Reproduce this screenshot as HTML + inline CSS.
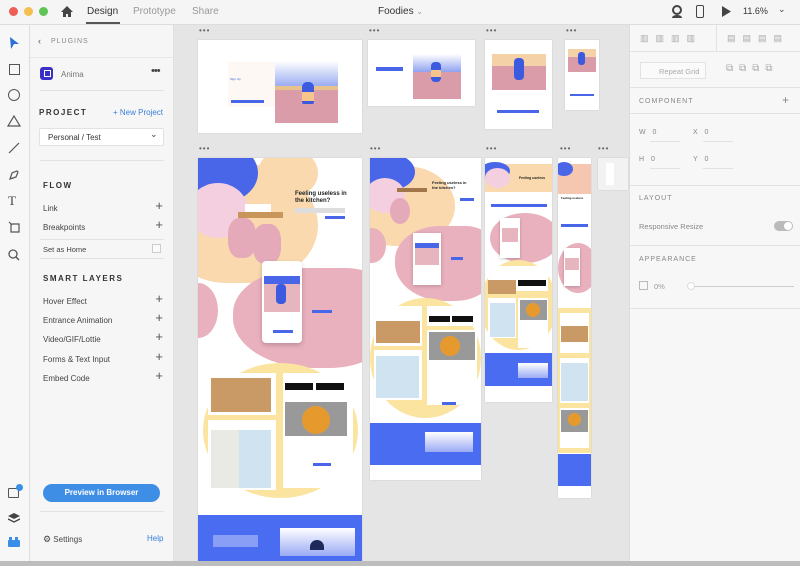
<!DOCTYPE html>
<html><head><meta charset="utf-8"><style>
*{margin:0;padding:0;box-sizing:border-box}
body{width:800px;height:566px;overflow:hidden;font-family:"Liberation Sans",sans-serif;background:#e5e5e5;position:relative;color:#444}
.a{position:absolute}
.top{left:0;top:0;width:800px;height:25px;background:#f5f5f5;border-bottom:1px solid #ddd}
.dot{width:9px;height:9px;border-radius:50%;top:7px}
.tb{left:0;top:25px;width:30px;height:536px;background:#f7f7f7;border-right:1px solid #ddd}
.pn{left:30px;top:25px;width:144px;height:536px;background:#f6f6f6;border-right:1px solid #e0e0e0}
.rp{left:629px;top:25px;width:171px;height:536px;background:#f7f7f7;border-left:1px solid #ddd}
.hd{font-size:8px;font-weight:bold;letter-spacing:1.5px;color:#333}
.it{font-size:8px;color:#444}
.pl{font-size:13px;color:#555;right:10px}
.hr{height:1px;background:#e2e2e2}
.ab{background:#fff;overflow:hidden;box-shadow:0 0 1px #bbb}
.dd{font-size:8px;color:#666;letter-spacing:1px}
.bl{border-radius:50%}
.rt{font-size:7px;color:#888;letter-spacing:1px}
</style></head><body>
<div class="a top">
<div class="a dot" style="left:9px;background:#ed5f57"></div>
<div class="a dot" style="left:24px;background:#f5be4f"></div>
<div class="a dot" style="left:39px;background:#5ec454"></div>
<svg class="a" style="left:60px;top:5px" width="14" height="13" viewBox="0 0 14 13"><path d="M7 1L1 7h2v5h3V9h2v3h3V7h2z" fill="#444"/></svg>
<div class="a" style="left:87px;top:6px;font-size:10px;color:#333">Design</div>
<div class="a" style="left:86px;top:22px;width:34px;height:2px;background:#555"></div>
<div class="a" style="left:133px;top:6px;font-size:10px;color:#999">Prototype</div>
<div class="a" style="left:192px;top:6px;font-size:10px;color:#999">Share</div>
<div class="a" style="left:378px;top:6px;font-size:10px;color:#333">Foodies <span style="color:#999;font-size:8px">⌄</span></div>
<svg class="a" style="left:671px;top:5px" width="12" height="13"><circle cx="6" cy="5" r="4" fill="none" stroke="#444" stroke-width="2"/><path d="M1 13c0-4 10-4 10 0" fill="#444"/></svg>
<div class="a" style="left:696px;top:5px;width:8px;height:13px;border:1.5px solid #444;border-radius:2px"></div>
<svg class="a" style="left:722px;top:6px" width="9" height="11"><path d="M0 0L9 5.5L0 11z" fill="#444"/></svg>
<div class="a" style="left:743px;top:6px;font-size:9px;color:#333">11.6%</div>
<div class="a" style="left:778px;top:4px;font-size:9px;color:#444">⌄</div>
</div>

<div class="a tb">
<svg class="a" style="left:9px;top:12px" width="10" height="12"><path d="M1 0L10 7H5L2 12z" fill="#2b6fd8"/></svg>
<div class="a" style="left:9px;top:39px;width:11px;height:11px;border:1.3px solid #555"></div>
<div class="a" style="left:8px;top:64px;width:12px;height:12px;border:1.3px solid #555;border-radius:50%"></div>
<svg class="a" style="left:7px;top:90px" width="14" height="12"><path d="M7 1L13 11H1z" fill="none" stroke="#555" stroke-width="1.2"/></svg>
<svg class="a" style="left:8px;top:117px" width="12" height="12"><path d="M1 11L11 1" stroke="#555" stroke-width="1.2"/></svg>
<svg class="a" style="left:8px;top:144px" width="12" height="12"><path d="M2 10L4 4 9 2 10 3 8 8z" fill="none" stroke="#555" stroke-width="1.2"/></svg>
<div class="a" style="left:8px;top:168px;font-size:13px;color:#444;font-family:'Liberation Serif'">T</div>
<svg class="a" style="left:8px;top:196px" width="12" height="12"><path d="M3 3h8v8H3z M1 1l3 3" fill="none" stroke="#555" stroke-width="1.2"/></svg>
<svg class="a" style="left:8px;top:224px" width="12" height="12"><circle cx="5" cy="5" r="4" fill="none" stroke="#555" stroke-width="1.3"/><path d="M8 8l3 3" stroke="#555" stroke-width="1.4"/></svg>
<div class="a" style="left:8px;top:463px;width:11px;height:10px;border:1.3px solid #555;border-radius:1px"></div>
<div class="a" style="left:16px;top:459px;width:7px;height:7px;border-radius:50%;background:#3b8ee8"></div>
<svg class="a" style="left:8px;top:488px" width="12" height="11"><path d="M6 0L12 3 6 6 0 3z" fill="#444"/><path d="M0 6l6 3 6-3" fill="none" stroke="#444" stroke-width="1.3"/></svg>
<div class="a" style="left:8px;top:515px;width:12px;height:7px;background:#3b8ee8;border-radius:1px"></div>
<div class="a" style="left:9px;top:512px;width:3px;height:3px;background:#3b8ee8"></div>
<div class="a" style="left:15px;top:512px;width:3px;height:3px;background:#3b8ee8"></div>
</div>

<div class="a pn">
<div class="a" style="left:8px;top:11px;font-size:9px;color:#555">‹</div>
<div class="a rt" style="left:21px;top:13px;color:#888">PLUGINS</div>
<div class="a hr" style="left:0;top:32px;width:144px;background:#e6e6e6"></div>
<div class="a" style="left:10px;top:42px;width:13px;height:13px;background:#3a2fc9;border-radius:3px"></div>
<div class="a" style="left:14px;top:45px;width:7px;height:7px;background:#fff"></div>
<div class="a" style="left:15px;top:46px;width:5px;height:5px;background:#3a2fc9"></div>
<div class="a it" style="left:31px;top:45px;color:#777">Anima</div>
<div class="a" style="left:121px;top:40px;font-size:11px;color:#444;letter-spacing:-1px">•••</div>
<div class="a hr" style="left:10px;top:65px;width:124px"></div>
<div class="a hd" style="left:9px;top:83px">PROJECT</div>
<div class="a" style="left:83px;top:83px;font-size:8px;color:#3a7fd8">+ New Project</div>
<div class="a" style="left:9px;top:103px;width:125px;height:18px;background:#fff;border:1px solid #e2e2e2;border-radius:2px"></div>
<div class="a it" style="left:18px;top:108px;color:#333">Personal / Test</div>
<div class="a" style="left:120px;top:104px;font-size:9px;color:#444">⌄</div>
<div class="a hr" style="left:10px;top:135px;width:124px"></div>
<div class="a hd" style="left:13px;top:156px">FLOW</div>
<div class="a it" style="left:13px;top:179px">Link</div><div class="a pl" style="top:173px">+</div>
<div class="a it" style="left:13px;top:198px">Breakpoints</div><div class="a pl" style="top:192px">+</div>
<div class="a hr" style="left:10px;top:214px;width:124px"></div>
<div class="a it" style="left:13px;top:220px;font-size:7.5px">Set as Home</div>
<div class="a" style="left:122px;top:219px;width:9px;height:9px;border:1px solid #ccc;background:#fafafa"></div>
<div class="a hr" style="left:10px;top:233px;width:124px"></div>
<div class="a hd" style="left:13px;top:249px">SMART LAYERS</div>
<div class="a it" style="left:13px;top:272px">Hover Effect</div><div class="a pl" style="top:266px">+</div>
<div class="a it" style="left:13px;top:291px">Entrance Animation</div><div class="a pl" style="top:285px">+</div>
<div class="a it" style="left:13px;top:310px">Video/GIF/Lottie</div><div class="a pl" style="top:304px">+</div>
<div class="a it" style="left:13px;top:330px">Forms &amp; Text Input</div><div class="a pl" style="top:324px">+</div>
<div class="a it" style="left:13px;top:349px">Embed Code</div><div class="a pl" style="top:343px">+</div>
<div class="a" style="left:13px;top:459px;width:117px;height:18px;background:#3f8ee6;border-radius:9px;color:#fff;font-size:8px;font-weight:bold;text-align:center;line-height:18px">Preview in Browser</div>
<div class="a hr" style="left:10px;top:486px;width:124px"></div>
<div class="a it" style="left:13px;top:509px"><span style="font-size:9px">⚙</span> Settings</div>
<div class="a" style="left:117px;top:509px;font-size:8px;color:#3a7fd8">Help</div>
</div>

<div class="a rp">
<div class="a hr" style="left:0;top:26px;width:171px"></div>
<div class="a" style="left:86px;top:0;width:1px;height:26px;background:#e2e2e2"></div>
<div class="a" style="left:10px;top:8px;font-size:9px;color:#aaa;letter-spacing:7px">▥▥▥▥</div>
<div class="a" style="left:97px;top:8px;font-size:9px;color:#aaa;letter-spacing:7px">▤▤▤▤</div>
<div class="a" style="left:10px;top:37px;width:66px;height:17px;border:1px solid #e3e3e3;background:#fafafa;font-size:7.5px;color:#aaa;padding:4px 0 0 18px">Repeat Grid</div>
<div class="a" style="left:96px;top:38px;font-size:10px;color:#aaa;letter-spacing:6px">⧉⧉⧉⧉</div>
<div class="a hr" style="left:0;top:62px;width:171px"></div>
<div class="a rt" style="left:9px;top:73px">COMPONENT</div>
<div class="a" style="left:152px;top:68px;font-size:12px;color:#888">+</div>
<div class="a hr" style="left:0;top:88px;width:171px"></div>
<div class="a rt" style="left:9px;top:104px">W&nbsp; 0</div><div class="a rt" style="left:63px;top:104px">X&nbsp; 0</div>
<div class="a rt" style="left:9px;top:131px">H&nbsp; 0</div><div class="a rt" style="left:63px;top:131px">Y&nbsp; 0</div>
<div class="a hr" style="left:20px;top:116px;width:30px"></div><div class="a hr" style="left:73px;top:116px;width:30px"></div>
<div class="a hr" style="left:20px;top:143px;width:30px"></div><div class="a hr" style="left:73px;top:143px;width:30px"></div>
<div class="a hr" style="left:0;top:160px;width:171px"></div>
<div class="a rt" style="left:9px;top:170px">LAYOUT</div>
<div class="a" style="left:9px;top:197px;font-size:7.5px;color:#888">Responsive Resize</div>
<div class="a" style="left:144px;top:196px;width:19px;height:10px;border-radius:5px;background:#bbb"></div>
<div class="a" style="left:154px;top:197px;width:8px;height:8px;border-radius:50%;background:#fff"></div>
<div class="a hr" style="left:0;top:220px;width:171px"></div>
<div class="a rt" style="left:9px;top:231px">APPEARANCE</div>
<div class="a" style="left:9px;top:256px;width:9px;height:9px;border:1px solid #bbb"></div>
<div class="a" style="left:24px;top:257px;font-size:7.5px;color:#999">0%</div>
<div class="a hr" style="left:60px;top:261px;width:104px;background:#ccc"></div>
<div class="a" style="left:57px;top:257px;width:8px;height:8px;border-radius:50%;background:#fff;border:1px solid #ddd"></div>
<div class="a hr" style="left:0;top:283px;width:171px"></div>
</div>

<!-- canvas -->
<div class="a dd" style="left:199px;top:26px">•••</div>
<div class="a dd" style="left:369px;top:26px">•••</div>
<div class="a dd" style="left:486px;top:26px">•••</div>
<div class="a dd" style="left:566px;top:26px">•••</div>
<div class="a dd" style="left:199px;top:144px">•••</div>
<div class="a dd" style="left:370px;top:144px">•••</div>
<div class="a dd" style="left:486px;top:144px">•••</div>
<div class="a dd" style="left:560px;top:144px">•••</div>
<div class="a dd" style="left:598px;top:144px">•••</div>

<div class="a ab" style="left:198px;top:40px;width:164px;height:93px">
<div class="a" style="left:30px;top:22px;width:50px;height:45px;background:#fdf8f3"></div>
<div class="a" style="left:32px;top:37px;font-size:3px;color:#3b5ae0">Sign Up</div>
<div class="a" style="left:33px;top:60px;width:33px;height:3px;background:#4a66e8"></div>
<div class="a" style="left:77px;top:21px;width:63px;height:62px;background:#d99ca8"></div>
<div class="a" style="left:77px;top:21px;width:63px;height:28px;background:linear-gradient(#fff,#8fa3f0)"></div>
<div class="a" style="left:77px;top:46px;width:63px;height:4px;background:#e8c28c"></div>
<div class="a" style="left:104px;top:42px;width:12px;height:22px;background:#3b5ae0;border-radius:5px 5px 2px 2px"></div>
<div class="a" style="left:104px;top:52px;width:12px;height:9px;background:#f5c58c"></div>
</div>
<div class="a ab" style="left:368px;top:40px;width:107px;height:66px">
<div class="a" style="left:8px;top:27px;width:27px;height:4px;background:#4a66e8"></div>
<div class="a" style="left:45px;top:14px;width:48px;height:45px;background:#d99ca8"></div>
<div class="a" style="left:45px;top:14px;width:48px;height:18px;background:linear-gradient(#fff,#8fa3f0)"></div>
<div class="a" style="left:63px;top:22px;width:10px;height:20px;background:#3b5ae0;border-radius:4px"></div>
<div class="a" style="left:63px;top:30px;width:10px;height:7px;background:#f5c58c"></div>
</div>
<div class="a ab" style="left:485px;top:40px;width:67px;height:89px">
<div class="a" style="left:7px;top:14px;width:54px;height:36px;background:#d99ca8"></div>
<div class="a" style="left:7px;top:14px;width:54px;height:12px;background:#f5d1a8"></div>
<div class="a" style="left:29px;top:18px;width:10px;height:22px;background:#3b5ae0;border-radius:4px"></div>
<div class="a" style="left:12px;top:70px;width:42px;height:3px;background:#4a66e8"></div>
</div>
<div class="a ab" style="left:565px;top:40px;width:34px;height:70px">
<div class="a" style="left:3px;top:9px;width:28px;height:23px;background:#d99ca8"></div>
<div class="a" style="left:3px;top:9px;width:28px;height:8px;background:#f5d1a8"></div>
<div class="a" style="left:13px;top:12px;width:7px;height:13px;background:#3b5ae0;border-radius:3px"></div>
<div class="a" style="left:5px;top:54px;width:24px;height:2px;background:#4a66e8"></div>
</div>

<!-- B1 -->
<div class="a ab" style="left:198px;top:158px;width:164px;height:408px">
<div class="a bl" style="left:-30px;top:5px;width:150px;height:120px;background:#f9d9ad;border-radius:40% 60% 55% 45%"></div>
<div class="a bl" style="left:60px;top:-10px;width:60px;height:50px;background:#f9d9ad"></div>
<div class="a bl" style="left:-15px;top:-15px;width:75px;height:60px;background:#4a66e8;border-radius:50%"></div>
<div class="a bl" style="left:-10px;top:25px;width:60px;height:55px;background:#f3cfe0"></div>
<div class="a" style="left:40px;top:54px;width:45px;height:6px;background:#c8955b"></div>
<div class="a" style="left:47px;top:46px;width:26px;height:8px;background:#fff"></div>
<div class="a bl" style="left:30px;top:60px;width:28px;height:40px;background:#e5aab9;border-radius:40%"></div>
<div class="a bl" style="left:55px;top:66px;width:28px;height:40px;background:#e5aab9;border-radius:40%"></div>
<div class="a" style="left:97px;top:33px;font-size:6px;font-weight:bold;color:#222;line-height:7px">Feeling useless in<br>the kitchen?</div>
<div class="a" style="left:97px;top:50px;width:50px;height:5px;background:#ddd"></div>
<div class="a" style="left:127px;top:58px;width:20px;height:3px;background:#4a66e8"></div>
<div class="a bl" style="left:35px;top:110px;width:160px;height:100px;background:#e9b0bd;border-radius:45% 30% 40% 50%"></div>
<div class="a bl" style="left:-20px;top:125px;width:40px;height:55px;background:#e9b0bd"></div>
<div class="a" style="left:64px;top:103px;width:40px;height:82px;background:#fff;border-radius:4px;box-shadow:0 2px 5px rgba(0,0,0,.2)"></div>
<div class="a" style="left:66px;top:118px;width:36px;height:36px;background:#e6b5bd"></div>
<div class="a" style="left:66px;top:118px;width:36px;height:8px;background:#4a66e8"></div>
<div class="a" style="left:78px;top:126px;width:10px;height:20px;background:#3b5ae0;border-radius:4px"></div>
<div class="a" style="left:75px;top:172px;width:20px;height:3px;background:#4a66e8"></div>
<div class="a" style="left:114px;top:152px;width:20px;height:3px;background:#4a66e8"></div>
<div class="a bl" style="left:5px;top:205px;width:155px;height:135px;background:#fbe3a0;border-radius:50%"></div>
<div class="a" style="left:10px;top:215px;width:68px;height:42px;background:#fff"></div>
<div class="a" style="left:13px;top:220px;width:60px;height:34px;background:#c99966"></div>
<div class="a" style="left:85px;top:215px;width:70px;height:35px;background:#fff"></div>
<div class="a" style="left:87px;top:225px;width:28px;height:7px;background:#111"></div>
<div class="a" style="left:118px;top:225px;width:28px;height:7px;background:#111"></div>
<div class="a" style="left:10px;top:262px;width:68px;height:70px;background:#fff"></div>
<div class="a" style="left:13px;top:272px;width:60px;height:58px;background:#cfe3f0"></div>
<div class="a" style="left:13px;top:272px;width:28px;height:58px;background:#eaeae4"></div>
<div class="a" style="left:85px;top:240px;width:70px;height:90px;background:#fff"></div>
<div class="a" style="left:87px;top:244px;width:62px;height:34px;background:#999"></div>
<div class="a bl" style="left:104px;top:248px;width:28px;height:28px;background:#e69a2e"></div>
<div class="a" style="left:115px;top:305px;width:18px;height:3px;background:#4a66e8"></div>
<div class="a" style="left:0;top:357px;width:164px;height:51px;background:#4a6cf0"></div>
<div class="a" style="left:82px;top:370px;width:75px;height:28px;background:linear-gradient(#fff,#9aaaf5)"></div>
<div class="a bl" style="left:112px;top:382px;width:14px;height:10px;background:#1e2a5a;border-radius:7px 7px 0 0"></div>
<div class="a" style="left:15px;top:377px;width:45px;height:12px;background:rgba(255,255,255,.35)"></div>
</div>

<!-- B2 -->
<div class="a ab" style="left:370px;top:158px;width:111px;height:322px">
<div class="a bl" style="left:-15px;top:8px;width:100px;height:80px;background:#f9d9ad;border-radius:45% 55% 55% 45%"></div>
<div class="a bl" style="left:-10px;top:-5px;width:55px;height:38px;background:#4a66e8"></div>
<div class="a bl" style="left:-5px;top:20px;width:40px;height:35px;background:#f3cfe0"></div>
<div class="a" style="left:27px;top:30px;width:30px;height:4px;background:#a0764a"></div>
<div class="a bl" style="left:20px;top:40px;width:20px;height:26px;background:#e5aab9"></div>
<div class="a" style="left:62px;top:22px;font-size:4px;font-weight:bold;color:#222;line-height:5px">Feeling useless in<br>the kitchen?</div>
<div class="a" style="left:90px;top:40px;width:14px;height:3px;background:#4a66e8"></div>
<div class="a bl" style="left:25px;top:68px;width:100px;height:75px;background:#e9b0bd;border-radius:45% 30% 40% 50%"></div>
<div class="a bl" style="left:-12px;top:70px;width:28px;height:35px;background:#e9b0bd"></div>
<div class="a" style="left:43px;top:75px;width:28px;height:52px;background:#fff;box-shadow:0 1px 4px rgba(0,0,0,.2)"></div>
<div class="a" style="left:45px;top:85px;width:24px;height:22px;background:#e6b5bd"></div>
<div class="a" style="left:45px;top:85px;width:24px;height:5px;background:#4a66e8"></div>
<div class="a" style="left:81px;top:99px;width:12px;height:3px;background:#4a66e8"></div>
<div class="a bl" style="left:0;top:140px;width:111px;height:120px;background:#fbe3a0;border-radius:50%"></div>
<div class="a" style="left:4px;top:148px;width:48px;height:40px;background:#fff"></div>
<div class="a" style="left:6px;top:163px;width:44px;height:22px;background:#c99966"></div>
<div class="a" style="left:57px;top:148px;width:50px;height:20px;background:#fff"></div>
<div class="a" style="left:59px;top:158px;width:21px;height:6px;background:#111"></div>
<div class="a" style="left:82px;top:158px;width:21px;height:6px;background:#111"></div>
<div class="a" style="left:4px;top:192px;width:48px;height:50px;background:#fff"></div>
<div class="a" style="left:6px;top:198px;width:43px;height:42px;background:#cfe3f0"></div>
<div class="a" style="left:57px;top:172px;width:50px;height:75px;background:#fff"></div>
<div class="a" style="left:59px;top:174px;width:46px;height:28px;background:#999"></div>
<div class="a bl" style="left:70px;top:178px;width:20px;height:20px;background:#e69a2e"></div>
<div class="a" style="left:72px;top:244px;width:14px;height:3px;background:#4a66e8"></div>
<div class="a" style="left:0;top:265px;width:111px;height:42px;background:#4a6cf0"></div>
<div class="a" style="left:55px;top:274px;width:48px;height:20px;background:linear-gradient(#fff,#9aaaf5)"></div>
</div>

<!-- B3 -->
<div class="a ab" style="left:485px;top:158px;width:67px;height:244px">
<div class="a" style="left:0;top:6px;width:67px;height:28px;background:#f9d9ad"></div>
<div class="a bl" style="left:-5px;top:4px;width:30px;height:18px;background:#4a66e8"></div>
<div class="a bl" style="left:0;top:10px;width:25px;height:20px;background:#f3cfe0"></div>
<div class="a" style="left:34px;top:16px;width:26px;height:10px;background:#fff0"></div>
<div class="a" style="left:34px;top:18px;font-size:3.5px;font-weight:bold;color:#222">Feeling useless</div>
<div class="a" style="left:6px;top:46px;width:56px;height:3px;background:#4a66e8"></div>
<div class="a bl" style="left:5px;top:55px;width:70px;height:50px;background:#e9b0bd"></div>
<div class="a" style="left:15px;top:60px;width:20px;height:40px;background:#fff;box-shadow:0 1px 3px rgba(0,0,0,.2)"></div>
<div class="a" style="left:17px;top:70px;width:16px;height:14px;background:#e6b5bd"></div>
<div class="a bl" style="left:-5px;top:102px;width:77px;height:90px;background:#fbe3a0"></div>
<div class="a" style="left:3px;top:108px;width:60px;height:25px;background:#fff"></div>
<div class="a" style="left:3px;top:122px;width:28px;height:14px;background:#c99966"></div>
<div class="a" style="left:33px;top:122px;width:28px;height:6px;background:#111"></div>
<div class="a" style="left:3px;top:140px;width:28px;height:40px;background:#fff"></div>
<div class="a" style="left:5px;top:145px;width:25px;height:34px;background:#cfe3f0"></div>
<div class="a" style="left:33px;top:140px;width:30px;height:50px;background:#fff"></div>
<div class="a" style="left:35px;top:142px;width:27px;height:20px;background:#999"></div>
<div class="a bl" style="left:41px;top:145px;width:14px;height:14px;background:#e69a2e"></div>
<div class="a" style="left:0;top:195px;width:67px;height:33px;background:#4a6cf0"></div>
<div class="a" style="left:33px;top:205px;width:30px;height:15px;background:linear-gradient(#fff,#9aaaf5)"></div>
</div>

<!-- B4 -->
<div class="a ab" style="left:558px;top:158px;width:33px;height:340px">
<div class="a" style="left:0;top:6px;width:33px;height:30px;background:#f5c6b0"></div>
<div class="a bl" style="left:-3px;top:4px;width:18px;height:14px;background:#4a66e8"></div>
<div class="a" style="left:3px;top:38px;font-size:3px;font-weight:bold;color:#222">Feeling useless</div>
<div class="a" style="left:3px;top:66px;width:27px;height:3px;background:#4a66e8"></div>
<div class="a bl" style="left:0;top:85px;width:40px;height:50px;background:#e9b0bd"></div>
<div class="a" style="left:6px;top:90px;width:16px;height:38px;background:#fff;box-shadow:0 1px 3px rgba(0,0,0,.2)"></div>
<div class="a" style="left:7px;top:100px;width:14px;height:12px;background:#e6b5bd"></div>
<div class="a" style="left:0;top:150px;width:33px;height:145px;background:#fbe3a0"></div>
<div class="a" style="left:2px;top:155px;width:29px;height:40px;background:#fff"></div>
<div class="a" style="left:3px;top:168px;width:27px;height:16px;background:#c99966"></div>
<div class="a" style="left:2px;top:200px;width:29px;height:45px;background:#fff"></div>
<div class="a" style="left:3px;top:205px;width:27px;height:38px;background:#cfe3f0"></div>
<div class="a" style="left:2px;top:250px;width:29px;height:40px;background:#fff"></div>
<div class="a" style="left:3px;top:252px;width:27px;height:22px;background:#999"></div>
<div class="a bl" style="left:10px;top:255px;width:13px;height:13px;background:#e69a2e"></div>
<div class="a" style="left:0;top:296px;width:33px;height:32px;background:#4a6cf0"></div>
</div>

<div class="a ab" style="left:598px;top:158px;width:30px;height:32px;background:#f2f2f2">
<div class="a" style="left:8px;top:5px;width:8px;height:22px;background:#fff"></div>
</div>

<div class="a" style="left:0;top:561px;width:800px;height:5px;background:#bdbdbd"></div>
</body></html>
